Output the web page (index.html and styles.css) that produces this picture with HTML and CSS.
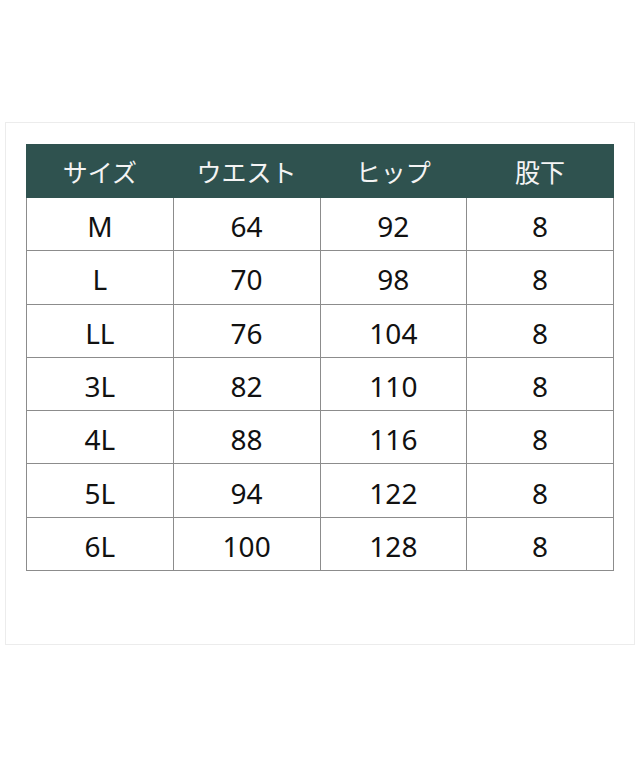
FILE: index.html
```html
<!DOCTYPE html>
<html lang="ja">
<head>
<meta charset="utf-8">
<link rel="stylesheet" href="styles.css">
</head>
<body>
<div class="frame">
  <table class="size-table">
    <thead>
      <tr><th>サイズ</th><th>ウエスト</th><th>ヒップ</th><th>股下</th></tr>
    </thead>
    <tbody>
      <tr><td>M</td><td>64</td><td>92</td><td>8</td></tr>
      <tr><td>L</td><td>70</td><td>98</td><td>8</td></tr>
      <tr><td>LL</td><td>76</td><td>104</td><td>8</td></tr>
      <tr><td>3L</td><td>82</td><td>110</td><td>8</td></tr>
      <tr><td>4L</td><td>88</td><td>116</td><td>8</td></tr>
      <tr><td>5L</td><td>94</td><td>122</td><td>8</td></tr>
      <tr><td>6L</td><td>100</td><td>128</td><td>8</td></tr>
    </tbody>
  </table>
</div>
</body>
</html>
```
FILE: styles.css
```css
html, body {
  margin: 0;
  padding: 0;
  background: #ffffff;
}
body {
  width: 640px;
  height: 768px;
  font-family: "Noto Sans", "Noto Sans CJK JP", sans-serif;
}
.frame {
  box-sizing: border-box;
  margin: 122px 0 0 5px;
  width: 630px;
  height: 523px;
  border: 1px solid #ececec;
  padding: 21px 0 0 20px;
}
.size-table {
  border-collapse: collapse;
  width: 588px;
  table-layout: fixed;
}
.size-table th,
.size-table td {
  box-sizing: border-box;
  text-align: center;
  padding: 0;
  font-weight: normal;
}
.size-table th {
  background: #2f524f;
  color: #f4f4f4;
  height: 53px;
  border: 1px solid #2f524f;
  font-family: "Noto Sans CJK JP", sans-serif;
  font-size: 25px;
  line-height: 1;
}
.size-table td {
  height: 53.3px;
  color: #111;
  border: 1px solid #8c8c8c;
  font-size: 28px;
  line-height: 1;
  padding-top: 4px;
}
.size-table tbody tr:first-child td {
  border-top: none;
}
```
